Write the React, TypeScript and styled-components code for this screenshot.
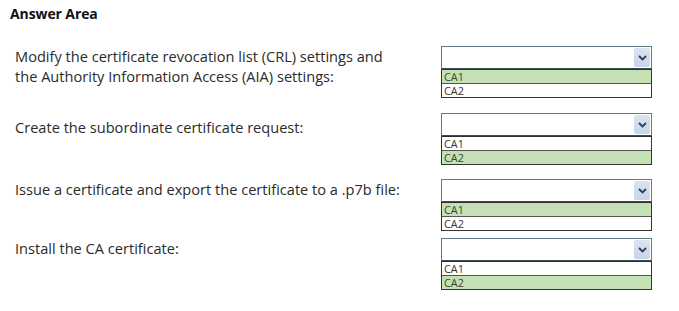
import React from "react";
import styled, { createGlobalStyle } from "styled-components";

const Global = createGlobalStyle`
  html, body { margin: 0; padding: 0; background: #ffffff; }
  body { font-family: "Open Sans", "Noto Sans", sans-serif; }
`;

const Page = styled.div`
  width: 679px;
  height: 311px;
  box-sizing: border-box;
  padding: 4px 0 0 10px;
  background: #fff;
  color: #2a2a2a;
`;

const Title = styled.div`
  font-family: "Open Sans", sans-serif;
  font-weight: 700;
  font-size: 14px;
  line-height: 19px;
  letter-spacing: -0.1px;
  color: #111;
`;

const Row = styled.div<{ $top: number }>`
  display: grid;
  grid-template-columns: 431px 211px;
  margin-top: ${(p) => p.$top}px;
`;

const Label = styled.div<{ $pad: number }>`
  padding: ${(p) => p.$pad}px 0 0 5px;
  font-family: "Open Sans", sans-serif;
  font-size: 14.6px;
  line-height: 20px;
  color: #2b2b2b;
  white-space: nowrap;
`;

const Dropdown = styled.div`
  display: flex;
  flex-direction: column;
  width: 211px;
`;

const Select = styled.div`
  height: 23px;
  box-sizing: border-box;
  border: 1px solid #5e7d88;
  border-bottom-color: #3c4e55;
  background: #fff;
  display: flex;
  justify-content: flex-end;
  align-items: center;
  padding-right: 1px;
`;

const Arrow = styled.div`
  width: 16px;
  height: 19px;
  background: linear-gradient(#dbe5f1, #c6d5e8);
  border-radius: 2px;
  display: flex;
  align-items: center;
  justify-content: center;
`;

const List = styled.div`
  border: 1px solid #333;
  border-top: none;
  display: flex;
  flex-direction: column;
`;

const Option = styled.div<{ $sel: boolean; $first: boolean }>`
  height: 13px;
  box-sizing: content-box;
  border-top: 1px solid ${(p) => (p.$first ? "#2f2f2f" : "#555")};
  background: ${(p) => (p.$sel ? "#c5e0b4" : "#fff")};
  color: ${(p) => (p.$sel ? "#2f4a2f" : "#333")};
  font-family: "Open Sans", sans-serif;
  font-size: 10.8px;
  line-height: 13px;
  padding-left: 2px;
`;

const Chevron = () => (
  <svg width="9" height="6" viewBox="0 0 9 6">
    <path d="M1 1 L4.5 4.5 L8 1" fill="none" stroke="#2c3e66" strokeWidth="1.8" />
  </svg>
);

type Item = { label: React.ReactNode; top: number; pad: number; sel: number };

const items: Item[] = [
  {
    label: (
      <>
        Modify the certificate revocation list (CRL) settings and
        <br />
        the Authority Information Access (AIA) settings:
      </>
    ),
    top: 23,
    pad: 0,
    sel: 0,
  },
  { label: "Create the subordinate certificate request:", top: 15, pad: 4, sel: 1 },
  { label: "Issue a certificate and export the certificate to a .p7b file:", top: 14, pad: 0, sel: 0 },
  { label: "Install the CA certificate:", top: 7, pad: 0, sel: 1 },
];

export default function App() {
  return (
    <>
      <Global />
      <Page>
        <Title>Answer Area</Title>
        {items.map((it, i) => (
          <Row key={i} $top={it.top}>
            <Label $pad={it.pad}>{it.label}</Label>
            <Dropdown>
              <Select>
                <Arrow>
                  <Chevron />
                </Arrow>
              </Select>
              <List>
                {["CA1", "CA2"].map((o, j) => (
                  <Option key={o} $sel={j === it.sel} $first={j === 0}>
                    {o}
                  </Option>
                ))}
              </List>
            </Dropdown>
          </Row>
        ))}
      </Page>
    </>
  );
}
